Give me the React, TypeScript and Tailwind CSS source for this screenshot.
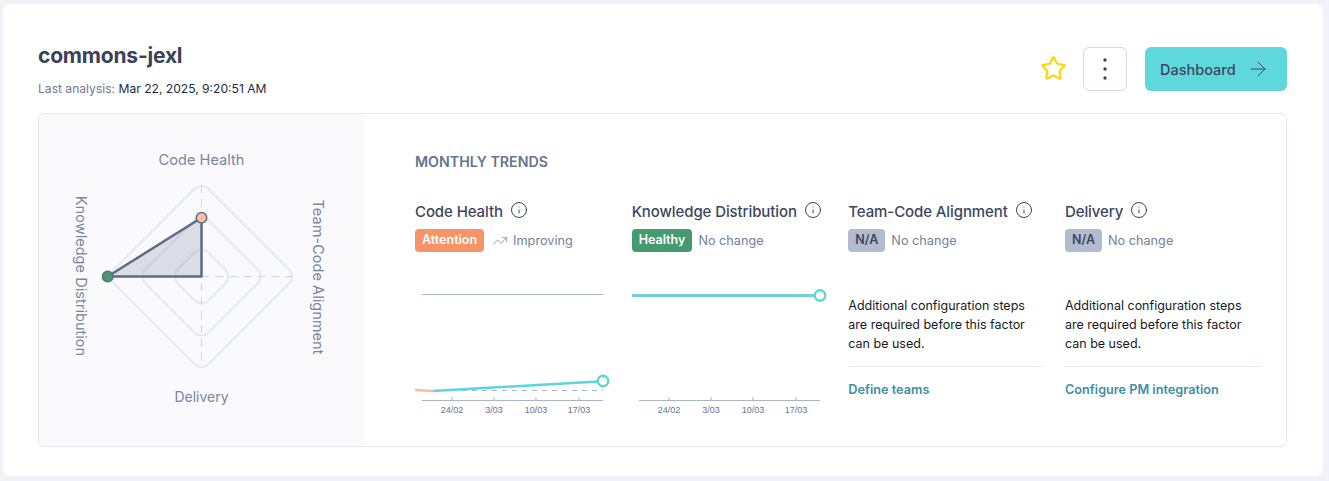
import { ArrowRight, Info, Star, TrendingUp } from "lucide-react";

const sans = "font-['Inter','Noto_Sans',sans-serif]";

// ── Radar chart on the left, coordinates are relative to the panel ─────────
function Radar() {
    const cx = 162.5;
    const cy = 162.5;
    return (
        <svg width="325" height="332" viewBox="0 0 325 332">
            {[133.8, 89.3, 43.6].map((s) => (
                <rect
                    key={s}
                    x={cx - s / 2}
                    y={cy - s / 2}
                    width={s}
                    height={s}
                    rx="10"
                    fill="none"
                    stroke="#e4eaf4"
                    strokeWidth="2"
                    transform={`rotate(45 ${cx} ${cy})`}
                />
            ))}
            <line x1={cx} y1={71} x2={cx} y2={254} stroke="#cfd5e6" strokeWidth="1" strokeDasharray="8 6" />
            <line x1={cx} y1={cy} x2={254} y2={cy} stroke="#cfd5e6" strokeWidth="1" strokeDasharray="8 6" />
            <path
                d={`M${cx} 103.7 L68.7 ${cy} L${cx} ${cy} Z`}
                fill="#5d6b8a"
                fillOpacity="0.2"
                stroke="#5d6b8a"
                strokeWidth="2.5"
                strokeLinejoin="round"
            />
            <circle cx={cx} cy={103.7} r="5.25" fill="#fbbd9f" stroke="#5d6b8a" strokeWidth="1.5" />
            <circle cx={68.7} cy={cy} r="5.25" fill="#459a6f" stroke="#5d6b8a" strokeWidth="1.5" />
            <g fill="#7a85a0" fontSize="14.6" textAnchor="middle" fontFamily="Inter, sans-serif">
                <text x={cx} y={51}>Code Health</text>
                <text x={cx} y={288} fontSize="14">Delivery</text>
                <text transform="translate(37 162) rotate(90)">Knowledge Distribution</text>
                <text transform="translate(274 163) rotate(90)">Team-Code Alignment</text>
            </g>
        </svg>
    );
}

const ticks = [
    { x: 37, label: "24/02" },
    { x: 79, label: "3/03" },
    { x: 121, label: "10/03" },
    { x: 164, label: "17/03" },
];

// Trend sparkline, shared x axis for both charts
function Spark({ kind }: { kind: "health" | "knowledge" }) {
    return (
        <svg width="195" height="135" viewBox="0 0 195 135" className="block">
            {kind === "health" ? (
                <>
                    <line x1="7" y1="9.5" x2="188" y2="9.5" stroke="#a9b5c9" strokeWidth="1" />
                    <line x1="7" y1="105.5" x2="188" y2="105.5" stroke="#a9b5c9" strokeWidth="1" strokeDasharray="5 5" />
                    <line x1="0" y1="105" x2="18" y2="106" stroke="#f7bda3" strokeWidth="2.5" />
                    <line x1="18" y1="106" x2="183" y2="96.5" stroke="#5cd6da" strokeWidth="2.5" />
                    <circle cx="188" cy="96" r="5.2" fill="#fff" stroke="#5cd6da" strokeWidth="2.5" />
                </>
            ) : (
                <>
                    <line x1="0" y1="10.5" x2="183" y2="10.5" stroke="#72d0d6" strokeWidth="3" />
                    <circle cx="188" cy="10.5" r="5.2" fill="#fff" stroke="#5cd6da" strokeWidth="2.5" />
                </>
            )}
            <line x1="7" y1="115.5" x2="188" y2="115.5" stroke="#a9b5c9" strokeWidth="1" />
            {ticks.map((t) => (
                <g key={t.label}>
                    <line x1={t.x} y1="112" x2={t.x} y2="115" stroke="#a9b5c9" strokeWidth="1" />
                    <text x={t.x} y="128" fontSize="9" textAnchor="middle" fill="#67748f" fontFamily="Liberation Sans, sans-serif">
                        {t.label}
                    </text>
                </g>
            ))}
        </svg>
    );
}

function Factor({
    title,
    badge,
    badgeClass,
    trend,
    improving,
    children,
}: {
    title: string;
    badge: string;
    badgeClass: string;
    trend: string;
    improving?: boolean;
    children: React.ReactNode;
}) {
    return (
        <div className="w-[216.67px] shrink-0">
            <div className="flex h-[20px] items-center gap-[7px]">
                <span className="text-[15px] font-medium tracking-[-0.1px] text-[#3d4660]">{title}</span>
                <Info size={18} strokeWidth={1.25} className="mb-[5px] text-[#2f3749]" />
            </div>
            <div className="mt-[7px] flex h-[23px] items-center">
                <span className={`flex h-[23px] items-center rounded-[4px] px-[7px] text-[12.5px] font-semibold ${badgeClass}`}>
                    {badge}
                </span>
                {improving && <TrendingUp size={16} strokeWidth={1.25} className="ml-[8px] text-[#7d879d]" />}
                <span className={`text-[12.7px] text-[#75809a] ${improving ? "ml-[5px]" : "ml-[6px]"}`}>{trend}</span>
            </div>
            {children}
        </div>
    );
}

function NotConfigured({ link }: { link: string }) {
    return (
        <div className="mt-[44px] w-[195px]">
            <p className="text-[12.5px] leading-[19px] text-[#161a24]">
                Additional configuration steps
                <br />
                are required before this factor
                <br />
                can be used.
            </p>
            <div className="mt-[13px] border-t border-[#e2e8f2] pt-[15px] text-[12.7px] font-semibold leading-[16px] text-[#3f8fa3]">
                {link}
            </div>
        </div>
    );
}

export default function App() {
    return (
        <div className={`h-[481px] w-[1329px] overflow-hidden bg-[#f1f3f9] pl-[3px] pt-[4px] ${sans}`}>
            <div className="h-[472px] w-[1320px] rounded-[8px] bg-white pl-[35px] pr-[36px] pt-[39px]">
                <div className="flex h-[70px] justify-between">
                    <div>
                        <h1 className="text-[21px] font-bold leading-[26px] tracking-[-0.2px] text-[#3a4258]">commons-jexl</h1>
                        <p className="mt-[12px] text-[12.1px] leading-[16px] text-[#6f7a94]">
                            Last analysis: <span className="text-[#1d2a45]">Mar 22, 2025, 9:20:51 AM</span>
                        </p>
                    </div>
                    <div className="flex items-start pt-[4px]">
                        <Star size={27} strokeWidth={2} className="mt-[8px] text-[#ffd60a]" />
                        <button className="ml-[16px] flex h-[44px] w-[44px] items-center justify-center rounded-[6px] border border-[#d3d9ea] bg-white">
                            <svg width="6" height="24" viewBox="0 0 6 24" fill="#3d4660">
                                <circle cx="3" cy="3" r="1.7" />
                                <circle cx="3" cy="12" r="1.7" />
                                <circle cx="3" cy="21" r="1.7" />
                            </svg>
                        </button>
                        <button className="ml-[18px] flex h-[44px] w-[142px] items-center rounded-[6px] bg-[#5fd8dc] pl-[15px] pt-[2px] text-[14.5px] font-medium text-[#3d4660]">
                            Dashboard
                            <ArrowRight size={24} strokeWidth={1} className="ml-[10px] mb-[2px]" />
                        </button>
                    </div>
                </div>

                <div className="flex h-[334px] w-[1249px] overflow-hidden rounded-[6px] border border-[#e5e8f1]">
                    <div className="w-[325px] shrink-0 bg-[#fafafd]">
                        <Radar />
                    </div>
                    <div className="pl-[51px] pt-[39px]">
                        <h2 className="text-[14.2px] font-semibold leading-[18px] text-[#67748f]">MONTHLY TRENDS</h2>
                        <div className="mt-[31px] flex">
                            <Factor title="Code Health" badge="Attention" badgeClass="bg-[#f49468] text-white" trend="Improving" improving>
                                <div className="mt-[33px]">
                                    <Spark kind="health" />
                                </div>
                            </Factor>
                            <Factor title="Knowledge Distribution" badge="Healthy" badgeClass="bg-[#459a6f] text-white" trend="No change">
                                <div className="mt-[33px]">
                                    <Spark kind="knowledge" />
                                </div>
                            </Factor>
                            <Factor title="Team-Code Alignment" badge="N/A" badgeClass="bg-[#b3bccf] text-[#3d4660]" trend="No change">
                                <NotConfigured link="Define teams" />
                            </Factor>
                            <Factor title="Delivery" badge="N/A" badgeClass="bg-[#b3bccf] text-[#3d4660]" trend="No change">
                                <NotConfigured link="Configure PM integration" />
                            </Factor>
                        </div>
                    </div>
                </div>
            </div>
        </div>
    );
}
